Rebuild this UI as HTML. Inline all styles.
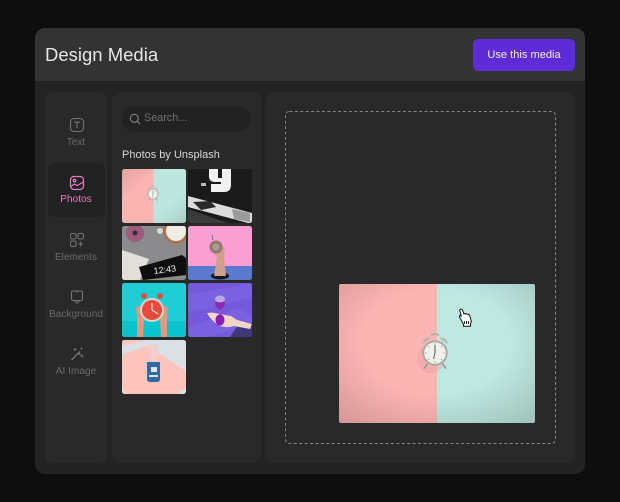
<!DOCTYPE html>
<html><head><meta charset="utf-8">
<style>
html,body{margin:0;padding:0;background:#0e0e0e}
body{width:620px;height:502px;position:relative;overflow:hidden;font-family:"Liberation Sans",sans-serif}
.a{position:absolute}
.t{position:absolute;white-space:nowrap;line-height:1}
.lab{position:absolute;left:45px;width:62px;text-align:center;font-size:10px;line-height:12px;letter-spacing:.05px;color:#6a6a6a;white-space:nowrap}
.th{position:absolute;width:64px;height:54px;border-radius:2.5px;overflow:hidden}
.th svg{display:block}
svg.i{position:absolute;fill:none;stroke:#737373;stroke-width:1.1}
</style></head><body>
<svg width="0" height="0" style="position:absolute"><defs>
<g id="clock"><path d="M-13-9Q-12-17-4-15.5Z" fill="#b8b8b2"/><path d="M13-9Q12-17 4-15.5Z" fill="#b8b8b2"/><path d="M-4-18Q0-21 4-18" stroke="#aaa" stroke-width="1.5" fill="none"/><path d="M-8 11l-3 5M8 11l3 5" stroke="#9a9a96" stroke-width="1.8"/><circle r="13" fill="#a9aaa4"/><circle r="11" fill="#f0f0ec"/><path d="M0-8V0L-1.500 6" stroke="#555" stroke-width="1" fill="none"/><path d="M0-10v1.500M7-7l-1 1M10 0H8.500M7 7l-1-1M0 10V8.500M-7 7l1-1M-10 0h1.500M-7-7l1 1" stroke="#888" stroke-width=".8"/></g>
<linearGradient id="v" x1="0" y1="0" x2="1" y2="1"><stop offset="0" stop-color="#000" stop-opacity=".1"/><stop offset=".3" stop-color="#000" stop-opacity="0"/><stop offset=".7" stop-color="#000" stop-opacity="0"/><stop offset="1" stop-color="#000" stop-opacity=".1"/></linearGradient>
<filter id="b"><feGaussianBlur stdDeviation=".35"/></filter>
</defs></svg>

<div class="a" style="left:35px;top:28px;width:550px;height:446px;background:#232323;border-radius:10px;overflow:hidden">
  <div class="a" style="left:0;top:0;width:550px;height:53px;background:#333"></div>
</div>
<div class="t" style="left:45px;top:46px;font-size:18.5px;color:#e6e6e6">Design Media</div>
<div class="a" style="left:473px;top:39px;width:102px;height:32px;background:#5f2bd6;border-radius:5px;color:#f2f0fb;font-size:11.1px;line-height:33px;text-align:center">Use this media</div>

<div class="a" style="left:45px;top:92px;width:62px;height:371px;background:#292929;border-radius:8px"></div>
<div class="a" style="left:112px;top:92px;width:149px;height:371px;background:#292929;border-radius:8px"></div>
<div class="a" style="left:266px;top:92px;width:309px;height:371px;background:#292929;border-radius:8px"></div>

<div class="a" style="left:48px;top:163px;width:57px;height:54px;background:#222;border-radius:6px"></div>

<svg class="i" style="left:69px;top:117px" width="16" height="16" viewBox="0 0 16 16"><rect x="1.5" y="1.5" width="13" height="13" rx="3.5"/><path d="M5 5.2h6M8 5.2v6"/></svg>
<div class="lab" style="top:137px">Text</div>

<svg class="i" style="left:69px;top:175px;stroke:#e77cc4;stroke-width:1.2" width="16" height="16" viewBox="0 0 16 16"><rect x="1.5" y="1.5" width="13" height="13" rx="3.5"/><circle cx="5.5" cy="5.5" r="1.3"/><path d="M1.800 11.500L5.500 9l2.500 1.600 6.500-3.600"/></svg>
<div class="lab" style="top:194px;color:#e77cc4">Photos</div>

<svg class="i" style="left:69px;top:232px" width="16" height="16" viewBox="0 0 16 16"><rect x="1.5" y="1.5" width="5.5" height="5.5" rx="1.5"/><rect x="9" y="1.5" width="5.5" height="5.5" rx="1.5"/><rect x="1.5" y="9" width="5.5" height="5.5" rx="1.5"/><path d="M11.700 9.500v5M9.200 12h5"/></svg>
<div class="lab" style="top:252px">Elements</div>

<svg class="i" style="left:69px;top:289px" width="16" height="16" viewBox="0 0 16 16"><path d="M4 2h8a1.500 1.500 0 0 1 1.500 1.500V10a1.500 1.500 0 0 1-1.500 1.500H4A1.500 1.500 0 0 1 2.500 10V3.500A1.500 1.500 0 0 1 4 2z"/><path d="M5 11.500L8 14l3-2.500M8 2v2"/></svg>
<div class="lab" style="top:309px">Background</div>

<svg class="i" style="left:69px;top:346px" width="16" height="16" viewBox="0 0 16 16"><path d="M2.500 14L11 5.500M9.500 7l2 2" stroke-width="1.5"/><path d="M6 2v3M4.500 3.500h3M13 8.500v3M11.500 10h3M12.500 1.500v2M11.500 2.500h2"/></svg>
<div class="lab" style="top:366px">AI Image</div>

<div class="a" style="left:122px;top:106px;width:129px;height:26px;background:#222;border-radius:13px"></div>
<svg class="i" style="left:129px;top:112.5px;stroke:#858585" width="12" height="12" viewBox="0 0 12 12"><circle cx="5.300" cy="5.300" r="4"/><path d="M8.300 8.300L11 11"/></svg>
<div class="t" style="left:144px;top:113px;font-size:10.8px;color:#707070">Search...</div>
<div class="t" style="left:122px;top:150px;font-size:11px;color:#d6d6d6">Photos by Unsplash</div>

<div class="th" style="left:122px;top:169px"><svg width="64" height="54"><rect width="32" height="54" fill="#fbb4b2"/><rect x="31.5" width="33" height="54" fill="#bde6df"/><rect width="64" height="54" fill="url(#v)"/><use href="#clock" transform="translate(31 25) scale(.42)"/></svg></div>

<div class="th" style="left:188px;top:169px"><svg width="64" height="54"><rect width="64" height="54" fill="#1a1a1a"/><path d="M0 27L64 44V54H60L0 38z" fill="#dcdcdc" filter="url(#b)"/><path d="M5 33l17-1 6 6-15 3z" fill="#2a2a2a"/><path d="M44 40l18 4v9l-16-3z" fill="#9a9a9a"/><path d="M0 40L40 54H0z" fill="#3a3a3a"/><path d="M21 0H30V9H34V0H43V16Q43 23 36 23H23V15H33V13H27Q21 13 21 7z" fill="#f2f2f2"/><rect x="13" y="14" width="5" height="3" fill="#bbb"/></svg></div>

<div class="th" style="left:122px;top:226px"><svg width="64" height="54"><rect width="64" height="54" fill="#8b8b8d"/><circle cx="13" cy="7" r="9" fill="#9c5a7c"/><circle cx="13" cy="7" r="2.5" fill="#3d2830"/><circle cx="54" cy="5" r="13" fill="#a47454"/><circle cx="54" cy="5" r="10" fill="#f1eee8"/><circle cx="38" cy="5" r="3" fill="#d8d8d8"/><path d="M0 24L27 33 18 54H0z" fill="#e2dfda"/><path d="M17 41L60 29 64 32V49L21 54Z" fill="#0e0e0e"/><text x="32" y="48" font-family="Liberation Sans" font-size="9" fill="#f2f2f2" transform="rotate(-7 32 48)">12:43</text></svg></div>

<div class="th" style="left:188px;top:226px"><svg width="64" height="54"><rect width="64" height="41" fill="#fb9ed2"/><rect y="40" width="64" height="14" fill="#5c7acd"/><ellipse cx="32" cy="50" rx="9" ry="3.5" fill="#151515"/><path d="M26 50L29 31 24 25 29 14 37 22 36 31 38 50z" fill="#cfa08c"/><circle cx="28" cy="21" r="6.5" fill="#8e7a72"/><circle cx="28" cy="21" r="3.5" fill="#b39a8a"/><path d="M25 14l-1-5" stroke="#777" stroke-width="1"/></svg></div>

<div class="th" style="left:122px;top:283px"><svg width="64" height="54"><rect width="64" height="54" fill="#1fcdd4"/><rect y="38" width="64" height="16" fill="#0bc3cc"/><path d="M15 54L15 34 14 24 20 22 22 38 21 54zM45 54L45 34 46 24 40 22 38 38 39 54z" fill="#e29a7e"/><circle cx="22" cy="13" r="3" fill="#e6523f"/><circle cx="38" cy="13" r="3" fill="#e6523f"/><circle cx="30" cy="27" r="12" fill="#d9d7d2"/><circle cx="30" cy="27" r="10" fill="#ea4a3b"/><path d="M30 27V20M30 27l6 4" stroke="#f5e5e0" stroke-width="1.1"/></svg></div>

<div class="th" style="left:188px;top:283px"><svg width="64" height="54"><rect width="64" height="54" fill="#7459dd"/><path d="M0 12L64 0V14L0 30zM0 45L50 25 64 34V42L20 54H0z" fill="#8068e2" opacity=".55"/><path d="M42 54L50 42 64 40V54z" fill="#3e3978"/><path d="M19 30q6-1 12 1l12 2 6 4 15 4-2 5-16-3q-10 3-17-2-6-4-10-11z" fill="#f3d5c8"/><ellipse cx="32" cy="37" rx="4.5" ry="5.5" fill="#8d1cb4"/><path d="M31 26h2v6h-2z" fill="#8b5bb5"/><path d="M27 19h10q0 6-5 8-5-2-5-8z" fill="#8b2bb5"/><ellipse cx="32" cy="16" rx="5" ry="3.5" fill="#b9a7e6"/></svg></div>

<div class="th" style="left:122px;top:340px"><svg width="64" height="54"><rect width="64" height="54" fill="#dbe0e4"/><path d="M0 0H26L0 6z" fill="#fcc9c3"/><path d="M0 14.700L25 6 64 31V48L55 54H3L0 46z" fill="#fdc3bd"/><path d="M25 22h13v17q0 3-3 3h-7q-3 0-3-3z" fill="#2f6aa6"/><rect x="29" y="27" width="6" height="5" fill="#dfe8f0"/><rect x="27" y="35" width="9" height="2" fill="#dfe8f0"/><path d="M27 4h10l-2 18h-6z" fill="#f0d0cc" opacity=".8"/></svg></div>

<svg class="a" style="left:285px;top:111px" width="271" height="333"><rect x=".5" y=".5" width="270" height="332" rx="4" fill="none" stroke="#858585" stroke-width="1" stroke-dasharray="3 2.4"/></svg>

<div class="a" style="left:339px;top:284px;width:196px;height:139px;border-radius:2px;overflow:hidden">
<svg width="196" height="139"><defs><radialGradient id="g" cx=".5" cy=".42" r=".75"><stop offset=".5" stop-color="#000" stop-opacity="0"/><stop offset="1" stop-color="#000" stop-opacity=".16"/></radialGradient></defs><rect width="98" height="139" fill="#fdb5b3"/><rect x="98" width="98" height="139" fill="#bee8e0"/><rect width="196" height="139" fill="url(#g)"/><ellipse cx="92" cy="75" rx="14" ry="14" fill="#e59c9c" opacity=".35" filter="url(#b)"/><use href="#clock" transform="translate(96 69) scale(.98)"/></svg>
</div>

<svg class="a" style="left:457px;top:308px" width="16" height="20" viewBox="0 0 16 20"><path d="M3 1.500q1.500-1 2.500.5l1.500 4q1-1 2 0 1-.5 1.800.5 1.200-.3 1.800.8l1.400 5q.5 2-.5 3.500v2.500H6.500v-2L2.500 9q-.5-1.300 1-1.500L4.500 8.500 2.800 3q-.2-1 .2-1.500z" fill="#fff" stroke="#111" stroke-width="1"/><path d="M7.500 13v3M9.500 13v3M11.500 13v3" stroke="#222" stroke-width="1"/></svg>
</body></html>
